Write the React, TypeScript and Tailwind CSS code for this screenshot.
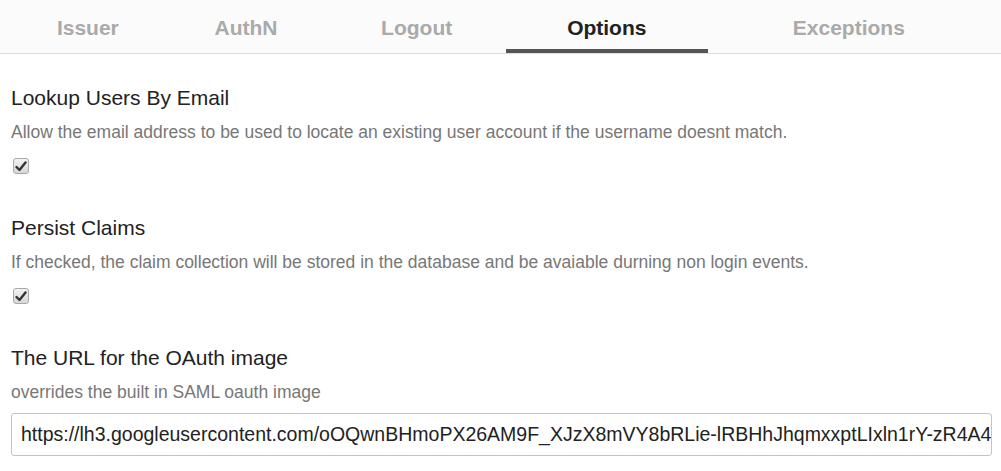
import React from "react";

const tabs = [
  { label: "Issuer", w: "w-[154px]" },
  { label: "AuthN", w: "w-[163px]" },
  { label: "Logout", w: "w-[179px]" },
  { label: "Options", w: "w-[202px]", active: true },
  { label: "Exceptions", w: "w-[283px]" },
];

function Check() {
  return (
    <span className="flex h-[16px] w-[16px] items-center justify-center rounded-[3px] border border-[#a9a9a9] bg-gradient-to-b from-[#f2f2f2] to-[#d8d8d8]">
      <svg width="12" height="11" viewBox="0 0 12 11">
        <path d="M1.5 6 L4.5 9 L10.5 1.5" fill="none" stroke="#333" strokeWidth="2.4" strokeLinecap="round" strokeLinejoin="round" />
      </svg>
    </span>
  );
}

function Section({ title, desc, children }: { title: string; desc: string; children: React.ReactNode }) {
  return (
    <div className="flex flex-col">
      <div className="text-[21px] leading-[24px] text-[#222]">{title}</div>
      <div className="mt-[11px] text-[17.5px] leading-[22px] text-[#777]">{desc}</div>
      {children}
    </div>
  );
}

export default function App() {
  return (
    <div className="min-h-[471px] bg-white" style={{ fontFamily: '"Liberation Sans", Arial, sans-serif' }}>
      <div className="flex h-[54px] border-b border-[#dcdcdc] bg-[#fbfbfb] px-[11px]">
        {tabs.map((t) => (
          <div
            key={t.label}
            className={`${t.w} flex items-center justify-center border-b-4 pt-[6px] text-[21px] font-bold ${
              t.active ? "border-[#555] text-[#222]" : "border-transparent text-[#aaa]"
            }`}
          >
            {t.label}
          </div>
        ))}
      </div>
      <div className="flex flex-col gap-[42px] pl-[11px] pr-[9px] pt-[32px]">
        <Section
          title="Lookup Users By Email"
          desc="Allow the email address to be used to locate an existing user account if the username doesnt match."
        >
          <div className="mt-[15px] pl-[2px]">
            <Check />
          </div>
        </Section>
        <Section
          title="Persist Claims"
          desc="If checked, the claim collection will be stored in the database and be avaiable durning non login events."
        >
          <div className="mt-[15px] pl-[2px]">
            <Check />
          </div>
        </Section>
        <Section title="The URL for the OAuth image" desc="overrides the built in SAML oauth image">
          <div className="mt-[10px] flex h-[43px] items-center overflow-hidden whitespace-nowrap rounded-[3px] border border-[#c4c4c4] px-[9px] text-[19.5px] text-[#222]">
            https://lh3.googleusercontent.com/oOQwnBHmoPX26AM9F_XJzX8mVY8bRLie-lRBHhJhqmxxptLIxln1rY-zR4A4
          </div>
        </Section>
      </div>
    </div>
  );
}
